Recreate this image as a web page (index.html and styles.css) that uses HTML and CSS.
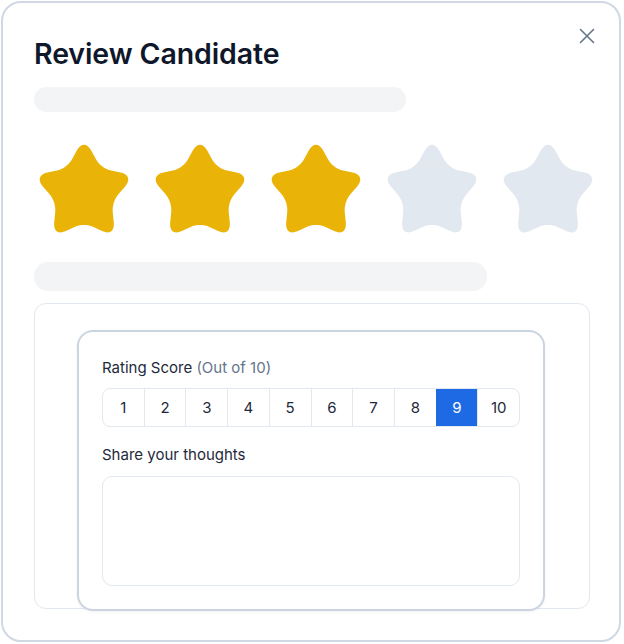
FILE: index.html
```html
<!DOCTYPE html>
<html lang="en">
<head>
<meta charset="utf-8">
<title>Review Candidate</title>
<link rel="stylesheet" href="styles.css">
</head>
<body>
<div class="card">
  <button class="close" aria-label="Close">
    <svg width="16" height="16" viewBox="0 0 16 16"><path d="M1.5 1.5 L14.5 14.5 M14.5 1.5 L1.5 14.5" stroke="#64748b" stroke-width="1.6" stroke-linecap="round" fill="none"/></svg>
  </button>
  <h1 class="title">Review Candidate</h1>
  <div class="bar bar-short"></div>
  <div class="stars">
    <svg class="star on" viewBox="0 0 90 90" preserveAspectRatio="none"><path d="M37.96 8.15 C42.18 0.86 47.82 0.86 52.04 8.15 L56.72 16.26 C59.74 21.47 65.67 25.78 71.56 27.04 L80.72 28.99 C88.96 30.75 90.7 36.11 85.07 42.38 L78.82 49.35 C74.79 53.83 72.53 60.8 73.15 66.79 L74.12 76.1 C74.99 84.48 70.43 87.79 62.73 84.37 L54.17 80.57 C48.67 78.13 41.33 78.13 35.83 80.57 L27.27 84.37 C19.57 87.79 15.01 84.48 15.88 76.1 L16.85 66.79 C17.47 60.8 15.21 53.83 11.18 49.35 L4.93 42.38 C-0.7 36.11 1.04 30.75 9.28 28.99 L18.44 27.04 C24.33 25.78 30.26 21.47 33.28 16.26 Z"/></svg>
    <svg class="star on" viewBox="0 0 90 90" preserveAspectRatio="none"><path d="M37.96 8.15 C42.18 0.86 47.82 0.86 52.04 8.15 L56.72 16.26 C59.74 21.47 65.67 25.78 71.56 27.04 L80.72 28.99 C88.96 30.75 90.7 36.11 85.07 42.38 L78.82 49.35 C74.79 53.83 72.53 60.8 73.15 66.79 L74.12 76.1 C74.99 84.48 70.43 87.79 62.73 84.37 L54.17 80.57 C48.67 78.13 41.33 78.13 35.83 80.57 L27.27 84.37 C19.57 87.79 15.01 84.48 15.88 76.1 L16.85 66.79 C17.47 60.8 15.21 53.83 11.18 49.35 L4.93 42.38 C-0.7 36.11 1.04 30.75 9.28 28.99 L18.44 27.04 C24.33 25.78 30.26 21.47 33.28 16.26 Z"/></svg>
    <svg class="star on" viewBox="0 0 90 90" preserveAspectRatio="none"><path d="M37.96 8.15 C42.18 0.86 47.82 0.86 52.04 8.15 L56.72 16.26 C59.74 21.47 65.67 25.78 71.56 27.04 L80.72 28.99 C88.96 30.75 90.7 36.11 85.07 42.38 L78.82 49.35 C74.79 53.83 72.53 60.8 73.15 66.79 L74.12 76.1 C74.99 84.48 70.43 87.79 62.73 84.37 L54.17 80.57 C48.67 78.13 41.33 78.13 35.83 80.57 L27.27 84.37 C19.57 87.79 15.01 84.48 15.88 76.1 L16.85 66.79 C17.47 60.8 15.21 53.83 11.18 49.35 L4.93 42.38 C-0.7 36.11 1.04 30.75 9.28 28.99 L18.44 27.04 C24.33 25.78 30.26 21.47 33.28 16.26 Z"/></svg>
    <svg class="star off" viewBox="0 0 90 90" preserveAspectRatio="none"><path d="M37.96 8.15 C42.18 0.86 47.82 0.86 52.04 8.15 L56.72 16.26 C59.74 21.47 65.67 25.78 71.56 27.04 L80.72 28.99 C88.96 30.75 90.7 36.11 85.07 42.38 L78.82 49.35 C74.79 53.83 72.53 60.8 73.15 66.79 L74.12 76.1 C74.99 84.48 70.43 87.79 62.73 84.37 L54.17 80.57 C48.67 78.13 41.33 78.13 35.83 80.57 L27.27 84.37 C19.57 87.79 15.01 84.48 15.88 76.1 L16.85 66.79 C17.47 60.8 15.21 53.83 11.18 49.35 L4.93 42.38 C-0.7 36.11 1.04 30.75 9.28 28.99 L18.44 27.04 C24.33 25.78 30.26 21.47 33.28 16.26 Z"/></svg>
    <svg class="star off" viewBox="0 0 90 90" preserveAspectRatio="none"><path d="M37.96 8.15 C42.18 0.86 47.82 0.86 52.04 8.15 L56.72 16.26 C59.74 21.47 65.67 25.78 71.56 27.04 L80.72 28.99 C88.96 30.75 90.7 36.11 85.07 42.38 L78.82 49.35 C74.79 53.83 72.53 60.8 73.15 66.79 L74.12 76.1 C74.99 84.48 70.43 87.79 62.73 84.37 L54.17 80.57 C48.67 78.13 41.33 78.13 35.83 80.57 L27.27 84.37 C19.57 87.79 15.01 84.48 15.88 76.1 L16.85 66.79 C17.47 60.8 15.21 53.83 11.18 49.35 L4.93 42.38 C-0.7 36.11 1.04 30.75 9.28 28.99 L18.44 27.04 C24.33 25.78 30.26 21.47 33.28 16.26 Z"/></svg>
  </div>
  <div class="bar bar-long"></div>
  <div class="panel">
    <div class="form">
      <div class="label">Rating Score <span class="muted">(Out of 10)</span></div>
      <div class="scale">
        <div class="cell">1</div>
        <div class="cell">2</div>
        <div class="cell">3</div>
        <div class="cell">4</div>
        <div class="cell">5</div>
        <div class="cell">6</div>
        <div class="cell">7</div>
        <div class="cell">8</div>
        <div class="cell selected">9</div>
        <div class="cell">10</div>
      </div>
      <div class="label label-gap">Share your thoughts</div>
      <div class="textarea"></div>
    </div>
  </div>
</div>
</body>
</html>
```

FILE: styles.css
```css
* {
  box-sizing: border-box;
}

html, body {
  margin: 0;
  padding: 0;
  background: #ffffff;
}

body {
  font-family: Inter, "Noto Sans", "Liberation Sans", sans-serif;
  color: #1e293b;
}

.card {
  position: relative;
  margin: 1px;
  width: 620px;
  height: 641px;
  border: 2px solid #cfd8e4;
  border-radius: 20px;
  padding: 34px 0 0 31px;
  background: #ffffff;
}

.close {
  position: absolute;
  top: 25px;
  right: 24px;
  width: 16px;
  height: 16px;
  padding: 0;
  border: 0;
  background: none;
  display: block;
}

.close svg {
  display: block;
}

.title {
  margin: 0 0 16px 0;
  font-size: 28.5px;
  line-height: 34px;
  font-weight: 600;
  color: #0f172a;
  letter-spacing: -0.1px;
}

.bar {
  background: #f3f4f6;
  border-radius: 14px;
}

.bar-short {
  width: 372px;
  height: 25px;
}

.bar-long {
  width: 453px;
  height: 29px;
  margin-top: 25px;
}

.stars {
  display: flex;
  gap: 24px;
  margin-top: 30px;
  margin-left: 3.5px;
  height: 95px;
}

.star {
  width: 92px;
  height: 95px;
  overflow: visible;
  display: block;
}

.star.on path {
  fill: #eab308;
}

.star.off path {
  fill: #e2e8f0;
}

.panel {
  margin-top: 12px;
  width: 556px;
  border: 1px solid #e2e8f0;
  border-radius: 12px;
  padding: 26px 43px 0 42px;
}

.form {
  margin-bottom: -3px;
  width: 468px;
  border: 2px solid #cbd5e1;
  border-radius: 16px;
  background: #ffffff;
  padding: 26px 23px 23px 23px;
  box-shadow: 0 1px 3px rgba(15, 23, 42, 0.06);
}

.label {
  font-size: 15px;
  line-height: 20px;
  color: #1e293b;
}

.muted {
  color: #64748b;
}

.label-gap {
  margin-top: 18px;
}

.scale {
  display: flex;
  margin-top: 10px;
  height: 39px;
  border: 1px solid #e2e8f0;
  border-radius: 8px;
  overflow: hidden;
}

.cell {
  flex: 1;
  display: flex;
  align-items: center;
  justify-content: center;
  font-size: 15px;
  color: #1e293b;
  border-left: 1px solid #e2e8f0;
}

.cell:first-child {
  border-left: 0;
}

.cell.selected {
  background: #1e6ae4;
  color: #ffffff;
  border-left-color: #1e6ae4;
}

.textarea {
  margin-top: 11px;
  height: 110px;
  border: 1px solid #e2e8f0;
  border-radius: 10px;
}
```
